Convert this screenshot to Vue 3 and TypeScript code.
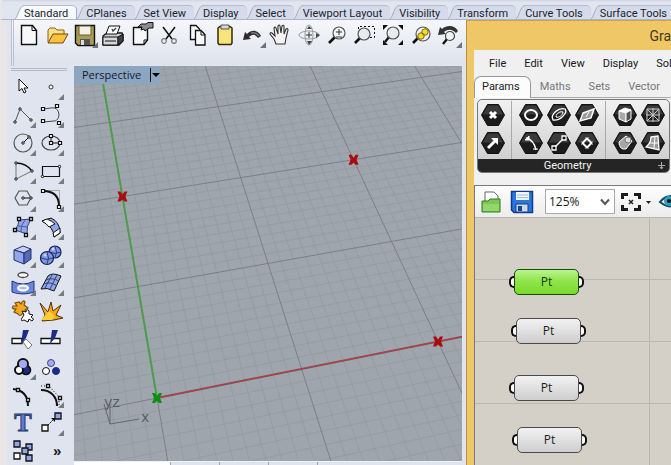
<script setup lang="ts">
import { ref } from 'vue'

type Part = { d: string; f?: string; s?: string; w?: number; dash?: string }
type Tool = { label: string; more?: boolean; glyph?: string; parts: Part[] }
type Point = [number, number]

const dot = (x: number, y: number, rx: number, ry = rx) =>
  `M${x - rx} ${y}a${rx} ${ry} 0 1 0 ${2 * rx} 0a${rx} ${ry} 0 1 0 ${-2 * rx} 0Z`
const sq = (x: number, y: number, h: number) => `M${x - h} ${y - h}h${2 * h}v${2 * h}h${-2 * h}Z`
const squares = (pts: Point[], h = 1.5) => pts.map(([x, y]) => sq(x, y, h)).join('')
const dots = (pts: Point[], r = 1.2) => pts.map(([x, y]) => dot(x, y, r)).join('')

const K = '#111'
const W = '#fff'
const B = '#8fa6ea'
const NAVY = '#1c2c86'

const tabs = ['Standard', 'CPlanes', 'Set View', 'Display', 'Select', 'Viewport Layout', 'Visibility', 'Transform', 'Curve Tools', 'Surface Tools']
const activeTab = ref('Standard')

const topTools: Tool[] = [
  { label: 'New', parts: [{ d: 'M7.500 4.500H18.500L22.500 9.500V23.500H7.500Z', f: '#f7f8fa', s: K, w: 1.4 }, { d: 'M18 4.500V9.500H22.500', s: K }] },
  { label: 'Open', parts: [{ d: 'M6 21V9L8 7H13L15 9H22V13', f: '#fbe08a', s: '#8a6112' }, { d: 'M6 22L11 13H26L21 22Z', f: '#f9c23a', s: '#6d4b08' }] },
  { label: 'Save', more: true, parts: [{ d: 'M5.500 4.500H24.500V24.500H8L5.500 22Z', f: '#a79c50', s: K, w: 1.4 }, { d: 'M9 5H21V14H9Z', f: '#f1f1e9', s: '#665f2c' }, { d: 'M10 18H20V24H10Z', f: '#555' }, { d: 'M11 19H14V24H11Z', f: '#ddd' }] },
  { label: 'Print', parts: [{ d: 'M5 15L9 12H24L25 14V20L21 24H5Z', f: '#cfd1d4', s: K, w: 1.3 }, { d: 'M8 13L11 5H22L19 13Z', f: W, s: K }, { d: 'M14 8L15 10L18 7', s: '#444', w: 1.4 }, { d: 'M5 16H20V24H5Z', f: '#d5d7da', s: K }, { d: 'M20 16L25 13V20L20 24Z', f: '#444', s: K }, { d: 'M7 20H18', s: '#555', w: 1.5 }] },
  { label: 'Properties', parts: [{ d: 'M7.500 6.500H21.500V19L18 23.500H7.500Z', f: '#f7f8fa', s: K, w: 1.4 }, { d: 'M21 19H18V23', s: K }, { d: 'M12 6L15 3H20L22 1.500H27V7H23L19 10L18 8L15 9L16 6Z', f: '#8b8d90', s: K }] },
  { label: 'Cut', parts: [{ d: 'M9 6L18 18M21 6L12 18', s: K, w: 1.5 }, { d: dot(10, 20, 2.3) + dot(20, 20, 2.3), s: '#777', w: 1.2 }] },
  { label: 'Copy', parts: [{ d: 'M8.500 4.500H14L17.500 8V18.500H8.500Z', f: '#f7f8fa', s: K, w: 1.3 }, { d: 'M13.500 9.500H19L23 13.500V24H13.500Z', f: '#f7f8fa', s: K, w: 1.3 }, { d: 'M19 10V14H23', s: K }] },
  { label: 'Paste', parts: [{ d: 'M10 5.500H20L22 7V22L21 23.500H9L8 22V7Z', f: '#f8e37c', s: '#332b05', w: 1.5 }, { d: 'M11 4H19V8H11Z', f: '#d7d8d8', s: '#555' }] },
  { label: 'Undo', more: true, parts: [{ d: 'M5 19L7 11L9 13C14 8 20 9 23 15L20 17C17 13 15 13 11 16L13 18Z', f: '#2a2c30' }, { d: 'M13 12C17 11 19 12 21 15', s: '#777', w: 1.5 }] },
  { label: 'Pan', parts: [{ d: 'M10 23L8 18L4 13Q4 11 6 12L9 15L8 7Q9 5 10 7L12 13V5Q13 3 14 5L15 12L16 5Q18 3 18 6V13L20 8Q22 7 22 9L20 17L19 23Z', f: '#f3f3f4', s: '#333', w: 1.1 }] },
  { label: 'Rotate view', parts: [{ d: dot(15, 14, 10, 4) + dot(15, 14, 4, 10), s: '#999', w: 1 }, { d: 'M13 8L15 5L18 8ZM22 12L26 14L22 17ZM13 20L15 24L18 20Z', f: '#444' }, { d: 'M12 14H18M15 11V17', s: '#333', w: 1 }] },
  { label: 'Zoom', parts: [{ d: 'M13 16L7 22', s: K, w: 2.6 }, { d: dot(17, 12, 6), f: '#f4f4f6', s: '#555', w: 1.2 }, { d: 'M14 11H20M17 8V14M14 16H20', s: '#333', w: 1 }] },
  { label: 'Zoom window', parts: [{ d: 'M8.500 16V5.500H24.500V16.500H20', s: K, dash: '2 2' }, { d: 'M10 17L5 22', s: K, w: 2.6 }, { d: dot(14, 13, 6), f: '#e9ebf0', s: '#555', w: 1.2 }] },
  { label: 'Zoom extents', parts: [{ d: 'M5 4H10L5 9ZM25 4V9L20 4ZM5 24V19L10 24ZM25 24H20L25 19Z', f: K }, { d: 'M11 16L7 21', s: K, w: 2.4 }, { d: dot(15, 12, 6), f: '#e9ebf0', s: '#555', w: 1.2 }] },
  { label: 'Zoom selected', parts: [{ d: 'M12 17L7 22', s: K, w: 2.6 }, { d: dot(17, 13, 7), f: '#eef0f3', s: '#555', w: 1.2 }, { d: dot(15, 15, 3.2) + dot(19, 11, 3.2), f: '#f4dd22', s: '#7c6d06' }] },
  { label: 'Undo view', more: true, parts: [{ d: 'M4 14L6 6L8 8C14 3 21 5 24 10L22 12C18 8 14 8 10 11L12 13Z', f: '#333' }, { d: 'M13 18L9 23', s: K, w: 2.4 }, { d: dot(16, 15, 4.5), f: '#f1f2f5', s: '#444', w: 1.2 }] },
]

const sideTools: Tool[] = [
  { label: 'Select', parts: [{ d: 'M10 6V18L13 15.500L15 20L17 19L15 15H19Z', f: W, s: K }] },
  { label: 'Point', more: true, parts: [{ d: dot(14, 14, 2), f: W, s: '#333' }] },
  { label: 'Polyline', more: true, parts: [{ d: 'M6 21L11 8L22 19', s: '#555' }, { d: dots([[6, 21], [11, 8], [22, 19]]), f: W, s: K }] },
  { label: 'Curve', more: true, parts: [{ d: 'M6 8L14 7C24 5 24 20 17 20L6 21', s: '#444' }, { d: squares([[6, 8], [20, 5], [6, 20], [22, 22]]), f: W, s: K, w: 1.2 }] },
  { label: 'Circle', more: true, parts: [{ d: dot(14, 14, 9), s: '#555', w: 1.2 }, { d: 'M14 14L20 8', s: K }, { d: dots([[14, 14], [20, 8]]), f: W, s: K }] },
  { label: 'Ellipse', more: true, parts: [{ d: dot(14, 14, 9, 7), s: '#444', w: 1.2 }, { d: 'M14 7V14H23', s: K }, { d: squares([[14, 7], [14, 14], [23, 14]]), f: W, s: K, w: 1.2 }] },
  { label: 'Arc', more: true, parts: [{ d: 'M23 14L7 22V6', s: '#777' }, { d: 'M7 6Q17 6 23 14', s: K, w: 1.3 }, { d: dots([[7, 6], [23, 14], [7, 22]]), f: W, s: K }] },
  { label: 'Rectangle', more: true, parts: [{ d: 'M5.500 9.500H22.500V19.500H5.500Z', s: K, w: 1.2 }, { d: dots([[22.5, 9.5], [5.5, 19.5]]), f: W, s: K }] },
  { label: 'Polygon', more: true, parts: [{ d: 'M10 6H18L22 13L18 20H10L6 13Z', s: '#555', w: 1.2 }, { d: 'M14 13H22', s: K }, { d: dots([[14, 13], [22, 13]]), f: W, s: K }] },
  { label: 'Fillet', more: true, parts: [{ d: 'M8 5.500H22.500V20', s: '#aaa' }, { d: 'M6 6C16 6 22 11 22 21', s: K, w: 2 }, { d: squares([[6, 6], [22, 22]]), f: W, s: K, w: 1.2 }] },
  { label: 'Surface from points', more: true, parts: [{ d: 'M10 7L22 6Q17 13 18 21L6 17Q10 12 10 7Z', f: B, s: '#35426f' }, { d: 'M16 7Q11 13 12 19M9 13L19 14', s: '#4b5d9c' }, { d: squares([[10, 6], [22, 6], [17, 22], [6, 17]]), f: W, s: K, w: 1.3 }] },
  { label: 'Sweep', more: true, parts: [{ d: 'M5 8L14 5Q23 9 23 20L17 24Q17 14 5 8Z', f: B, s: K }, { d: 'M5 8L10 6Q15 8 18 11L12 14Q10 11 5 8ZM16 20L23 15V20L17 24Z', f: W, s: K }] },
  { label: 'Box', more: true, parts: [{ d: 'M5 9L14 5L22 8L15 12Z', f: '#c3cffa', s: '#263368' }, { d: 'M5 9L15 12V23L5 19Z', f: '#91a6ee', s: '#263368' }, { d: 'M15 12L22 8V18L15 23Z', f: '#5269bd', s: '#263368' }] },
  { label: 'Sphere', more: true, parts: [{ d: dot(18, 11, 6), f: '#7e96e4', s: '#14204f', w: 1.2 }, { d: 'M12 11Q18 14 24 11M18 5Q21 11 18 17', s: '#2c3c80' }, { d: dot(10, 17, 6.5), f: '#7e96e4', s: '#14204f', w: 1.2 }, { d: 'M4 17Q10 20 16 17M10 11Q13 17 10 23', s: '#2c3c80' }, { d: dot(16, 8, 1.5) + dot(8, 14, 1.5), f: '#c9d5ff' }] },
  { label: 'Offset surface', more: true, parts: [{ d: dot(14, 6, 5, 2.5), f: W, s: '#444', w: 1.3 }, { d: 'M3 12Q14 18 25 12V23Q14 27 3 23Z', f: '#6c87dd', s: '#24346e' }, { d: dot(14, 19, 5, 2.5), f: '#a8b9f5', s: W, w: 2 }] },
  { label: 'Mesh', more: true, parts: [{ d: 'M11 7Q15 3 24 7L17 22Q10 18 4 20Z', f: B, s: K }, { d: 'M15 6L8 19M20 6L13 20M9 11Q15 8 22 12M7 15Q13 12 20 17', s: '#35426f' }] },
  { label: 'Join', parts: [{ d: 'M6 6L10 5L12 7Q14 2 16 5L15 8L19 11L16 13L18 16L13 17Q11 20 9 17L5 15L7 12Q2 12 4 9L8 9Z', f: '#f5a81d', s: '#75500e', w: 1.2 }, { d: 'M13 14L17 15Q18 11 20 14L20 17L24 18L22 20Q26 22 23 24L20 22L19 25L15 23Q11 25 13 21L15 18Z', f: W, s: K }] },
  { label: 'Explode', parts: [{ d: 'M3 6L11 15L14 5L16 14L24 8L19 18L26 21L17 23L5 24L8 18Z', f: '#f9a51d', s: '#4e3409' }, { d: 'M4 23L12 14L18 19L15 23Z', f: '#ffcf35' }] },
  { label: 'Trim', parts: [{ d: 'M3 13.500H13V18.500H3Z', f: W, s: K, w: 1.3 }, { d: 'M14 17L17 14L23 20L19 24Z', f: W, s: '#777' }, { d: 'M14 5H20L17 13L12 19Z', f: NAVY }] },
  { label: 'Split', parts: [{ d: 'M4 13.500H23V18.500H4Z', f: W, s: K, w: 1.3 }, { d: 'M15 5H21L18 13L13 19Z', f: NAVY }] },
  { label: 'Group', more: true, parts: [{ d: dot(14, 11, 5), f: '#9aa0e6', s: K, w: 2 }, { d: dot(17, 17, 4.5), f: NAVY, s: K, w: 1.6 }, { d: dot(10, 17, 4), f: W, s: K, w: 2 }, { d: dot(14, 11, 4), f: '#a5abee' }] },
  { label: 'Ungroup', parts: [{ d: dot(14, 10, 3.5), f: '#a5abee', s: '#404a8e' }, { d: dot(9, 18, 3.5), f: W, s: K }, { d: dot(19, 18, 3.5), f: NAVY, s: NAVY }] },
  { label: 'Edit points', parts: [{ d: 'M4 8C14 9 19 14 19 25', s: K, w: 2 }, { d: squares([[9, 9], [19, 19]]), f: W, s: K, w: 1.3 }] },
  { label: 'Control points', more: true, parts: [{ d: 'M4 5H12L22 16V25', s: K, dash: '1 2' }, { d: 'M4 9C14 9 20 16 20 25', s: K, w: 2 }, { d: squares([[11, 5], [23, 17]]), f: W, s: K, w: 1.3 }] },
  { label: 'Text', glyph: 'T', parts: [] },
  { label: 'Scale', more: true, parts: [{ d: 'M11 16L17 10', s: K, dash: '2 1' }, { d: 'M14 9H18V13Z', f: K }, { d: sq(21, 7, 3), f: B, s: K, w: 1.3 }, { d: sq(8, 19, 3), f: W, s: K, w: 1.3 }] },
  { label: 'Array', parts: [{ d: sq(8, 7, 3) + sq(20, 10, 3), f: B, s: K, w: 1.3 }, { d: sq(16, 14, 3) + sq(20, 21, 3), f: B, s: K, w: 1.3 }, { d: sq(8, 19, 3), f: W, s: K, w: 1.3 }] },
]

/* Maps construction-plane units to viewport pixels through a projective transform. */
const corners: Point[] = [[83, 332], [364, 275.5], [248, 25.7], [35.7, 56.3]]
function makeProjection([a, b, c, d]: Point[], spanX: number, spanY: number) {
  const sx = a[0] - b[0] + c[0] - d[0]
  const sy = a[1] - b[1] + c[1] - d[1]
  const dx1 = b[0] - c[0], dx2 = d[0] - c[0]
  const dy1 = b[1] - c[1], dy2 = d[1] - c[1]
  const det = dx1 * dy2 - dx2 * dy1
  const g = (sx * dy2 - dx2 * sy) / det
  const h = (dx1 * sy - sx * dy1) / det
  return (x: number, y: number): Point => {
    const u = x / spanX
    const v = y / spanY
    const w = g * u + h * v + 1
    return [
      ((b[0] - a[0] + g * b[0]) * u + (d[0] - a[0] + h * d[0]) * v + a[0]) / w,
      ((b[1] - a[1] + g * b[1]) * u + (d[1] - a[1] + h * d[1]) * v + a[1]) / w,
    ]
  }
}
const project = makeProjection(corners, 2, 3)
const segment = (p: Point, q: Point) =>
  `M${project(...p).map(n => n.toFixed(1)).join(' ')}L${project(...q).map(n => n.toFixed(1)).join(' ')}`
let minor = ''
let major = ''
for (let i = -10; i <= 50; i++) {
  const line = segment([i / 10, -1.5], [i / 10, 5]) + segment([-1, i / 10], [5, i / 10])
  if (i % 10 === 0) major += line
  else minor += line
}
const xAxis = segment([0, 0], [5, 0])
const yAxis = segment([0, 0], [0, 3.63])
const cross = 'M-5 -5H-2L0 -2L2 -5H5L3 0L5 5H2L0 3L-2 5H-5L-3 0Z'
const markers = [
  { at: project(0, 0), color: '#0b8f12' },
  { at: project(2, 0), color: '#a80b12' },
  { at: project(0, 2), color: '#a80b12' },
  { at: project(2, 2), color: '#a80b12' },
]

const menus = ['File', 'Edit', 'View', 'Display', 'Sol']
const ribbonTabs = ['Params', 'Maths', 'Sets', 'Vector']
const activeRibbon = ref('Params')
const ribbonGroups: Tool[][] = [
  [
    { label: 'Point', parts: [{ d: 'M11 11L17 17M17 11L11 17', s: W, w: 3 }] },
    { label: 'Vector', parts: [{ d: 'M9 19L16 12', s: W, w: 3 }, { d: 'M12 9H19V16Z', f: W }] },
  ],
  [
    { label: 'Circle', parts: [{ d: dot(14, 14, 6, 5), s: W, w: 2 }] },
    { label: 'Curve', parts: [{ d: 'M8 19C5 13 14 6 20 8C23 11 16 20 8 19Z', s: W, w: 1.3 }, { d: 'M11 16C11 12 16 10 18 11C18 14 14 17 11 16Z', s: W }] },
    { label: 'Plane', parts: [{ d: 'M10 12L21 8L18 17L7 20Z', f: '#999', s: W, w: 1.5 }, { d: 'M13 16L16 11', s: W }] },
    { label: 'Arc', parts: [{ d: 'M9 9Q17 11 19 21', s: W, w: 1.6 }, { d: 'M8 11L12 7V11ZM16 20H21', f: W, s: W }] },
    { label: 'Line', parts: [{ d: 'M9 19L19 9', s: W, w: 1.5 }, { d: squares([[9, 19], [19, 9]], 2), f: K, s: W, w: 1.3 }] },
    { label: 'Rectangle', parts: [{ d: 'M8 12L16 20M12 8L20 16M12 20L20 12M8 16L16 8', s: '#888' }, { d: 'M14 9.500L18.500 14L14 18.500L9.500 14Z', s: W, w: 2 }] },
  ],
  [
    { label: 'Box', parts: [{ d: 'M8 10L14 7L20 9L15 12Z', f: W, s: W }, { d: 'M8 10L15 12V21L8 18Z', f: '#aaa', s: W }, { d: 'M15 12L20 9V18L15 21Z', f: '#555', s: W }] },
    { label: 'Mesh', parts: [{ d: 'M8 8H20V20H8ZM14 7V21M7 14H21M8 8L20 20M20 8L8 20', s: '#ccc' }] },
    { label: 'Brep', parts: [{ d: 'M8 13L15 7L21 12L15 20Q8 21 8 13Z', f: '#a5a5a5', s: W }, { d: dot(17, 11, 3), f: '#ddd', s: '#777' }] },
    { label: 'Surface', parts: [{ d: 'M12 8L19 7L20 21L7 18Q12 14 12 8Z', f: '#999', s: W, w: 1.3 }, { d: 'M16 8L15 19M11 14H20', s: W }] },
  ],
]
const hex = 'M8.500 3.500H19.500L25.500 14L19.500 24.500H8.500L2.500 14Z'
const zoom = ref('125%')
const nodes = [
  { x: 37, y: 52, selected: true },
  { x: 39, y: 101, selected: false },
  { x: 37, y: 158, selected: false },
  { x: 40, y: 210, selected: false },
]
</script>

<template>
  <div class="desktop">
    <nav class="tabstrip" aria-label="Toolbars">
      <button v-for="t in tabs" :key="t" class="tab" :class="{ active: t === activeTab }" @click="activeTab = t">
        <svg class="slant" width="9" height="14" aria-hidden="true"><path d="M0 14C3 12 4 1 9 .5V14Z" /><path class="edge" d="M0 14C3 12 4 1 9 .5" /></svg>
        <span>{{ t }}</span>
      </button>
    </nav>

    <div class="workspace">
      <main class="modeler">
        <div class="toolbar">
          <button v-for="t in topTools" :key="t.label" class="tool" :aria-label="t.label">
            <svg width="28" height="28" aria-hidden="true">
              <path v-for="(p, i) in t.parts" :key="i" :d="p.d" :fill="p.f ?? 'none'" :stroke="p.s ?? 'none'" :stroke-width="p.w ?? 1" :stroke-dasharray="p.dash" />
              <path v-if="t.more" d="M28 21V27H22Z" fill="#6d7178" />
            </svg>
          </button>
        </div>
        <div class="lower">
          <aside class="palette">
            <div class="grip"></div>
            <div class="grid">
              <button v-for="t in sideTools" :key="t.label" class="tool" :aria-label="t.label">
                <svg width="28" height="28" aria-hidden="true">
                  <path v-for="(p, i) in t.parts" :key="i" :d="p.d" :fill="p.f ?? 'none'" :stroke="p.s ?? 'none'" :stroke-width="p.w ?? 1" :stroke-dasharray="p.dash" />
                  <text v-if="t.glyph" class="glyph" x="14" y="22">{{ t.glyph }}</text>
                  <path v-if="t.more" d="M27 21V27H21Z" fill="#777b82" />
                </svg>
              </button>
              <button class="tool overflow">»</button>
            </div>
          </aside>
          <section class="view">
            <div class="viewport">
              <button class="viewname">Perspective<span class="caret"><svg width="9" height="14" aria-hidden="true"><path d="M1 5H9L5 9Z" /></svg></span></button>
              <svg class="scene" aria-hidden="true">
                <path :d="minor" class="minor" />
                <path :d="major" class="major" />
                <path :d="yAxis" class="yaxis" />
                <path :d="xAxis" class="xaxis" />
                <path v-for="(m, i) in markers" :key="i" :d="cross" :fill="m.color" :transform="`translate(${m.at[0]} ${m.at[1]})`" />
                <path d="M36 358L30 338M36 358V338M36 358L65 353" class="triad" />
                <g class="axisnames"><text x="30" y="341">y</text><text x="38" y="341">z</text><text x="67" y="356">x</text></g>
              </svg>
            </div>
            <div class="viewtabs"><i></i><i></i><i></i><i></i></div>
          </section>
        </div>
      </main>

      <section class="window">
        <header class="title">Gra</header>
        <div class="client">
          <nav class="menubar"><button v-for="m in menus" :key="m">{{ m }}</button></nav>
          <nav class="ribbontabs">
            <button v-for="t in ribbonTabs" :key="t" :class="{ active: t === activeRibbon }" @click="activeRibbon = t">{{ t }}</button>
          </nav>
          <div class="ribbonarea">
            <div class="ribbon">
              <div class="groups">
                <div v-for="(g, gi) in ribbonGroups" :key="gi" class="group">
                  <button v-for="t in g" :key="t.label" class="tool" :aria-label="t.label">
                    <svg width="28" height="28" aria-hidden="true">
                      <path :d="hex" fill="#1b1b1b" stroke="#111" stroke-linejoin="round" />
                      <path d="M9 4.500H19L24 13.500H4Z" fill="#3a3a3a" />
                      <path v-for="(p, i) in t.parts" :key="i" :d="p.d" :fill="p.f ?? 'none'" :stroke="p.s ?? 'none'" :stroke-width="p.w ?? 1" />
                    </svg>
                  </button>
                </div>
              </div>
              <div class="caption"><span>Geometry</span><svg width="9" height="9" aria-hidden="true"><path d="M4.500 1V8M1 4.500H8M3 6L4.500 8L6 6" /></svg></div>
            </div>
          </div>
          <div class="canvasbar">
            <button class="tool" aria-label="Open file">
              <svg width="28" height="28" aria-hidden="true"><path d="M7 4H16L20 8V17H7Z" fill="#fff" stroke="#666" /><path d="M4 13H10L12 11H22V24H4Z" fill="#7cc653" stroke="#2d7a25" /><path d="M5 16H21V23H5Z" fill="#93d86c" /></svg>
            </button>
            <button class="tool" aria-label="Save file">
              <svg width="28" height="28" aria-hidden="true"><path d="M3.500 3.500H24.500V24.500H6L3.500 22Z" fill="#2877dc" stroke="#123a8a" stroke-width="1.500" /><path d="M8 4H21V12H8Z" fill="#eef4fb" /><path d="M9 7H20M9 9.500H20" stroke="#a6bed8" /><path d="M8 16H20V24H8Z" fill="#cfd8e4" stroke="#17419b" /><path d="M10 18H14V23H10Z" fill="#17419b" /></svg>
            </button>
            <i class="rule"></i>
            <label class="zoom">
              <select v-model="zoom" aria-label="Zoom level"><option>125%</option></select>
              <svg width="10" height="8" aria-hidden="true"><path d="M1 1.500L5 6L9 1.500" /></svg>
            </label>
            <button class="tool" aria-label="Zoom extents">
              <svg width="28" height="28" aria-hidden="true"><path d="M6.500 11V6.500H12M18 6.500H23.500V11M23.500 17V21.500H18M12 21.500H6.500V17" fill="none" stroke="#1b1b1b" stroke-width="3" /><path d="M13 12L17 16M17 12L13 16" stroke="#222" stroke-width="1.500" /></svg>
            </button>
            <svg class="drop" width="10" height="28" aria-hidden="true"><path d="M2 13H7L4.500 16Z" /></svg>
            <button class="tool eye" aria-label="Preview">
              <svg width="28" height="28" aria-hidden="true"><path d="M2 14Q12 2 25 14Q13 23 2 14Z" fill="#e9f5f8" stroke="#174a5e" stroke-width="2" /><circle cx="11" cy="13" r="5" fill="#2a9dbb" /><circle cx="11" cy="13" r="2" fill="#111" /></svg>
            </button>
          </div>
          <div class="canvas">
            <button v-for="(n, i) in nodes" :key="i" class="node" :class="{ selected: n.selected }" :style="{ left: n.x + 'px', top: n.y + 'px' }">
              <i class="port"></i><span>Pt</span><i class="port out"></i>
            </button>
          </div>
        </div>
      </section>
    </div>
  </div>
</template>

<style>
body { margin: 0; }
#app { height: 100vh; }
</style>

<style scoped>
* { box-sizing: border-box; }
button { margin: 0; padding: 0; border: 0; background: none; color: inherit; font: inherit; }
svg { display: block; flex: none; }
.desktop { display: flex; flex-direction: column; height: 100%; overflow: hidden; background: #dfe4ee; font: 11px/16px Roboto, "Liberation Sans", sans-serif; color: #16181c; }
.tabstrip { flex: none; display: flex; height: 20px; padding: 5px 0 0 13px; border-left: 2px solid #e9e7e5; background: linear-gradient(#d5d9e5 0 1px, #e1e5f0 2px 100%); border-bottom: 1px solid #aab5ca; overflow: hidden; }
.tab { flex: none; display: flex; height: 14px; line-height: 15px; white-space: nowrap; color: #20242d; }
.tab span { padding-right: 8px; background: #d5dbea; border-top: 1px solid #b2bdd2; border-top-right-radius: 5px; }
.slant { fill: #d5dbea; }
.slant .edge { fill: none; stroke: #9facc4; }
.tab.active span { background: #f8f9fc; border-right: 1px solid #9facc4; }
.tab.active .slant { fill: #f8f9fc; }
.workspace { flex: 1; min-height: 0; display: grid; grid-template-columns: minmax(0, 1fr) 205px; }
.modeler { min-width: 0; min-height: 0; display: flex; flex-direction: column; border-left: 7px solid #e9e7e5; }
.toolbar { flex: none; display: flex; height: 46px; margin-left: 4px; padding: 1px 0 0 0; border-left: 3px double #b9c1d0; background: linear-gradient(#f6f7fb, #e1e5ee 38px, #dfe4ee); overflow: hidden; }
.tool { flex: none; display: block; width: 28px; height: 28px; }
.lower { flex: 1; min-height: 0; display: flex; }
.palette { flex: none; width: 67px; padding: 2px 6px 0 2px; overflow: hidden; }
.grip { height: 3px; margin: 0 1px 2px 2px; border: solid #b3bac8; border-width: 1px 0; }
.grid { display: grid; grid-template-columns: 28px 28px; }
.glyph { font: bold 26px "Liberation Serif", serif; fill: #5f7bd0; stroke: #27356c; text-anchor: middle; }
.grid svg { overflow: visible; }
.overflow { padding-left: 16px; font: bold 15px/28px "Liberation Sans", sans-serif; text-align: left; }
.view { flex: 1; min-width: 0; display: flex; flex-direction: column; padding-right: 4px; }
.viewport { flex: 1; min-height: 0; display: grid; background: #9fa5ac; overflow: hidden; }
.viewport > * { grid-area: 1 / 1; }
.viewname { justify-self: start; align-self: start; z-index: 1; display: flex; align-items: center; height: 18px; padding: 0 0 0 8px; background: #8ca5c1; color: #101c2c; font: 11px/18px "Open Sans", sans-serif; }
.caret { margin-left: 9px; border-left: 1px solid #101418; }
.scene { width: 100%; height: 100%; min-height: 0; fill: none; }
.minor { stroke: #929aa2; stroke-width: 1; opacity: .8; }
.major { stroke: #7b8087; stroke-width: 1; }
.xaxis { stroke: #9d4650; stroke-width: 2; }
.yaxis { stroke: #4f9b50; stroke-width: 2; }
.triad { stroke: #62666c; }
.axisnames { fill: #565a60; font: 14px "Liberation Mono", monospace; }
.viewtabs { flex: none; display: flex; height: 4px; border-top: 1px solid #eef1f7; }
.viewtabs i { width: 49px; border-right: 1px solid #9ea6b5; }
.viewtabs i:first-child { width: 97px; background: #fff; }
.window { min-width: 0; min-height: 0; display: flex; flex-direction: column; padding-left: 7px; border-left: 1px solid #b88e49; border-top: 1px solid #c8a352; background: #f0c766; }
.title { flex: none; height: 29px; text-align: right; font-size: 14px; line-height: 30px; color: #443819; overflow: hidden; }
.client { flex: 1; min-height: 0; display: flex; flex-direction: column; background: #f0f0f0; overflow: hidden; }
.menubar { flex: none; display: flex; gap: 18px; height: 26px; padding-left: 15px; line-height: 25px; white-space: nowrap; }
.ribbontabs { flex: none; display: flex; height: 22px; color: #75777a; }
.ribbontabs button { padding: 0 9px; border-bottom: 1px solid #a9a9a9; }
.ribbontabs button:last-child { flex: 1; text-align: left; }
.ribbontabs .active { padding: 0 10px 2px 7px; color: #17191c; background: #fcfcfc; border: solid #989898; border-width: 1px 1px 0 1px; border-radius: 7px 7px 0 0; }
.ribbonarea { flex: none; padding: 1px 1px 12px 3px; }
.ribbon { border: 1px solid #777; border-radius: 5px; background: linear-gradient(#f1f1f1, #c9c9c9); overflow: hidden; }
.groups { display: flex; height: 59px; padding: 1px 1px 0; overflow: hidden; }
.group { display: grid; grid-auto-flow: row; grid-template-columns: repeat(3, 28px); align-content: start; }
.group:first-child { grid-template-columns: 28px; }
.group:last-child { grid-template-columns: 28px 28px; }
.group + .group { margin-left: 4px; padding-left: 5px; border-left: 1px solid #aaa; }
.caption { display: flex; align-items: center; height: 13px; padding: 0 3px 0 0; background: #252525; color: #f4f4f4; line-height: 12px; }
.caption span { flex: 1; text-align: center; }
.caption svg { fill: none; stroke: #aaa; stroke-width: 1; }
.canvasbar { flex: none; display: flex; align-items: center; height: 32px; padding-left: 3px; border: solid #77797c; border-width: 1px 0 0 1px; background: linear-gradient(#fdfdfd, #ececec); overflow: hidden; }
.canvasbar .tool + .tool { margin-left: 2px; }
.rule { width: 1px; height: 20px; margin: 0 5px 0 4px; background: #c9c9c9; }
.zoom { flex: none; display: grid; grid-template-columns: 1fr 14px; align-items: center; width: 70px; height: 25px; margin-right: 1px; border: 1px solid #a9a9a9; background: #fff; }
.zoom select { grid-area: 1 / 1 / 2 / 3; width: 100%; height: 23px; padding: 0 3px; border: 0; background: none; appearance: none; font: 12px/23px "Open Sans", sans-serif; color: #17191c; }
.zoom svg { grid-area: 1 / 2; fill: none; stroke: #555; stroke-width: 2; pointer-events: none; }
.drop { fill: #222; }
.eye { margin-left: 4px; }
.canvas { position: relative; flex: 1; border-left: 1px solid #77797c; background: linear-gradient(90deg, transparent 174px, #b9b7b0 174px) 0 0 / 175px 100%, linear-gradient(transparent 61px, #b9b7b0 61px) 0 1px / 100% 62px, #d4d0c8; }
.node { position: absolute; display: flex; align-items: center; height: 26px; margin-left: -3px; font: 12px/24px "Open Sans", sans-serif; }
.node span { width: 65px; height: 26px; border: 1px solid #4a4a4a; border-radius: 5px; background: linear-gradient(#f2f2f2, #e2e2e2 45%, #cecece); color: #222; }
.node.selected span { border-color: #1c4a0d; background: linear-gradient(#baf58f, #8fe44c 45%, #7ada2b); color: #143c08; }
.port { width: 5px; height: 12px; border: 2px solid #111; border-right: 0; border-radius: 6px 0 0 6px; background: #fff; }
.port.out { border: 2px solid #111; border-left: 0; border-radius: 0 6px 6px 0; }
</style>
